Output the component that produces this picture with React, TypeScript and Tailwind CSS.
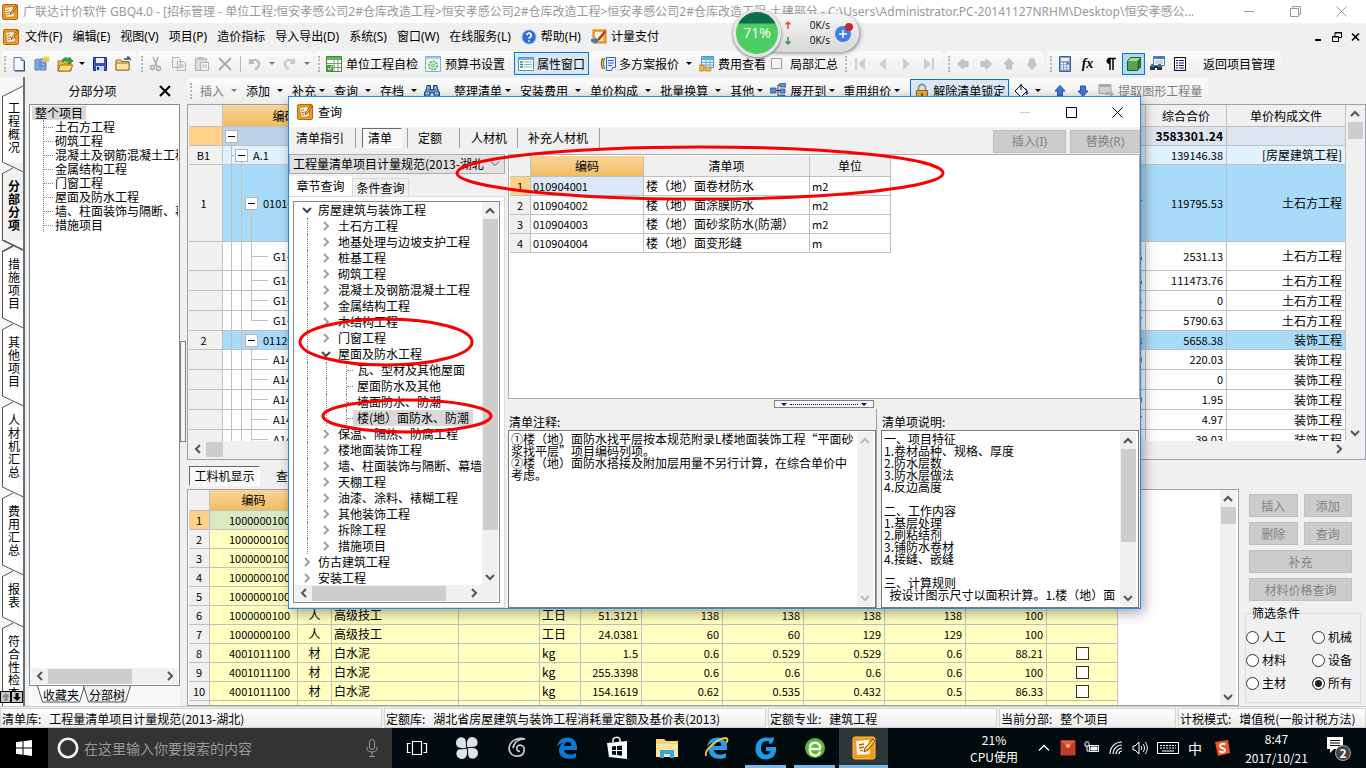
import type { ReactNode } from "react";

/* ---------- small shared pieces ---------- */

const AppIcon = ({ className = "w-4 h-4" }: { className?: string }) => (
  <svg viewBox="0 0 16 16" className={`${className} shrink-0`} aria-hidden="true">
    <rect x="0.5" y="0.5" width="15" height="15" rx="1.5" fill="#f39a1b" stroke="#c4640c" />
    <path d="M2.5 3.5 L11 2.5 L12.5 12.5 L4 13.5 Z" fill="#fff6df" stroke="#b0660f" strokeWidth="0.6" />
    <path d="M4 6.5 L7 5.5 M4.3 8.8 L8 8 M4.6 11 L7 10.5" stroke="#a8540c" strokeWidth="0.9" />
    <path d="M14.2 1.2 L8.8 8.2 L8.2 10.6 L10.3 9.4 L15.2 2.4 Z" fill="#ffd23a" stroke="#8b2f08" strokeWidth="0.8" />
  </svg>
);

const Grip = () => <span className="h-4 w-[3px] shrink-0 border-l-2 border-dotted border-[#b4b4b4]" />;
const Sep = () => <span className="h-4 w-px shrink-0 bg-[#b9b9b9]" />;
const Caret = ({ className = "w-3", muted = false, fill = "#000" }: { className?: string; muted?: boolean; fill?: string }) => (
  <span className={`flex shrink-0 justify-center ${className}`}>
    <svg viewBox="0 0 6 3" className="h-[3px] w-[6px]">
      <path d="M0 0h6L3 3z" fill={muted ? "#777" : fill} />
    </svg>
  </span>
);

const Tool = ({ label, className = "w-[23px]", children }: { label: string; className?: string; children: ReactNode }) => (
  <button aria-label={label} className={`flex h-[22px] shrink-0 items-center justify-center ${className}`}>
    <svg viewBox="0 0 16 16" className="h-4 w-4" fill="none">
      {children}
    </svg>
  </button>
);

const Ico = ({ children }: { children: ReactNode }) => (
  <svg viewBox="0 0 16 16" className="h-4 w-4 shrink-0" fill="none" aria-hidden="true">
    {children}
  </svg>
);

const Strip = ({ className = "", children }: { className?: string; children: ReactNode }) => (
  <div className={`flex h-[26px] shrink-0 items-center rounded-sm bg-linear-to-b from-[#fbfbfb] to-[#ededed] ${className}`}>{children}</div>
);

const arrowPaths = {
  up: "M2 8 L6 4 L10 8",
  down: "M2 4 L6 8 L10 4",
  left: "M8 2 L4 6 L8 10",
  right: "M4 2 L8 6 L4 10",
};

const Chevron = ({ dir, color = "#555" }: { dir: keyof typeof arrowPaths; color?: string }) => (
  <svg viewBox="0 0 12 12" className="h-3 w-3 shrink-0" fill="none">
    <path d={arrowPaths[dir]} stroke={color} strokeWidth="2" />
  </svg>
);

const VScroll = ({ thumb = "", muted = false }: { thumb?: string; muted?: boolean }) => (
  <div className="flex w-4 shrink-0 flex-col items-center bg-[#f0f0f0]">
    <span className="flex h-[17px] items-center">
      <Chevron dir="up" color={muted ? "#bbb" : "#555"} />
    </span>
    <span className={`w-[15px] bg-[#cdcdcd] ${thumb}`} />
    <span className="flex-1" />
    <span className="flex h-[17px] items-center">
      <Chevron dir="down" color={muted ? "#bbb" : "#555"} />
    </span>
  </div>
);

const HScroll = ({ thumb, pad = "" }: { thumb: string; pad?: string }) => (
  <div className={`flex h-4 shrink-0 items-center bg-[#f0f0f0] ${pad}`}>
    <span className="flex w-[17px] justify-center">
      <Chevron dir="left" />
    </span>
    <span className={`h-[15px] bg-[#cdcdcd] ${thumb}`} />
    <span className="flex-1" />
    <span className="flex w-[17px] justify-center">
      <Chevron dir="right" />
    </span>
  </div>
);

/* ---------- title and menu ---------- */

const TitleBar = () => (
  <header className="flex h-[23px] shrink-0 items-center bg-white pl-0.5 text-[#999]">
    <AppIcon />
    <h1 className="ml-[5px] min-w-0 flex-1 overflow-hidden whitespace-nowrap text-xs [font-family:'Noto_Sans','Noto_Sans_CJK_SC',sans-serif]">
      广联达计价软件 GBQ4.0 - [招标管理 - 单位工程:恒安孝感公司2#仓库改造工程&gt;恒安孝感公司2#仓库改造工程&gt;恒安孝感公司2#仓库改造工程-土建部分 -
      C:\Users\Administrator.PC-20141127NRHM\Desktop\恒安孝感公...
    </h1>
    <div className="flex gap-[35px] pr-[19px]">
      <button aria-label="最小化">
        <svg viewBox="0 0 11 11" className="h-[11px] w-[11px]" stroke="#999"><path d="M0 5.5h10" /></svg>
      </button>
      <button aria-label="还原">
        <svg viewBox="0 0 11 11" className="h-[11px] w-[11px]" stroke="#999" fill="none"><path d="M.5 2.5h8v8h-8zM2.500 2.500v-2h8v8h-2" /></svg>
      </button>
      <button aria-label="关闭">
        <svg viewBox="0 0 11 11" className="h-[11px] w-[11px]" stroke="#999"><path d="M.5.5l10 10M10.500.5l-10 10" /></svg>
      </button>
    </div>
  </header>
);

const menus = ["文件(F)", "编辑(E)", "视图(V)", "项目(P)", "造价指标", "导入导出(D)", "系统(S)", "窗口(W)", "在线服务(L)"];

const MenuBar = () => (
  <nav className="flex h-[27px] shrink-0 items-center pl-[3px] text-xs [font-family:'Noto_Sans','Noto_Sans_CJK_SC',sans-serif]">
    <AppIcon />
    <div className="ml-[6px] flex gap-[10px] whitespace-nowrap">
      {menus.map((m) => (
        <button key={m}>{m}</button>
      ))}
      <button className="flex items-center gap-1">
        <Ico>
          <circle cx="8" cy="8" r="7" fill="#2e6bd6" stroke="#9db9e8" />
          <path d="M5.800 6.300a2.200 2.200 0 1 1 3.200 2c-.8.4-1 .8-1 1.500M8 11.200v1.500" stroke="#fff" strokeWidth="1.700" />
        </Ico>
        帮助(H)
      </button>
      <button className="flex items-center gap-1">
        <Ico>
          <rect x="2" y="1" width="13" height="13" fill="#f7a52a" stroke="#d77a10" />
          <path d="M4 3h8v9H4z" fill="#fff3dc" />
          <path d="M14 1L7 9l-1 3 3-1 6-8z" fill="#b5391c" />
          <path d="M0 10h4V8l4 3.500L4 15v-2H0z" fill="#2d7fd6" />
        </Ico>
        计量支付
      </button>
    </div>
    <div className="ml-auto flex items-center gap-[9px] pr-[5px]">
      <button aria-label="最小化子窗口">
        <svg viewBox="0 0 10 10" className="h-[10px] w-[10px]"><path d="M2 7h6v2H2z" /></svg>
      </button>
      <button aria-label="还原子窗口">
        <svg viewBox="0 0 10 10" className="h-[10px] w-[10px]" fill="none" stroke="#000"><path d="M.5 4.500h6v5h-6zM.5 5h6M3 4V.5h6.500v5H7M3 1h6.500" /></svg>
      </button>
      <button aria-label="关闭子窗口">
        <svg viewBox="0 0 10 10" className="h-[10px] w-[10px]" stroke="#000" strokeWidth="1.600"><path d="M1 1.500l7 7M8 1.500l-7 7" /></svg>
      </button>
    </div>
  </nav>
);

/* ---------- toolbars ---------- */

const ArrowShape = ({ rotate, fill, stroke }: { rotate: number; fill: string; stroke: string }) => (
  <path d="M8 2.500L13 8h-2.500v5h-5V8H3z" transform={`rotate(${rotate} 8 8)`} fill={fill} stroke={stroke} />
);

const MainToolbar = () => (
  <div className="flex h-[27px] shrink-0 items-center whitespace-nowrap pl-0.5 text-xs">
    <Strip className="w-[134px] pl-0.5">
      <Grip />
      <Tool label="新建">
        <path d="M3 1.500h7l3 3v10H3z" fill="#f4f9ff" stroke="#5c7ea8" />
        <path d="M10 1.500v3h3" stroke="#5c7ea8" />
        <path d="M13.500 5v10H4" stroke="#2f4866" />
      </Tool>
      <Tool label="新建工程">
        <path d="M1 4l4-1v11H1zM6 3h6v11H6z" fill="#9cc0ea" stroke="#4f7bb3" />
        <path d="M7.500 5v8M10 5v8M3 5v8M6 7h6M6 10h6" stroke="#4f7bb3" strokeWidth=".7" />
        <path d="M12.500 0v7M9 3.500h7M10 1l5 5M15 1l-5 5" stroke="#f3c535" strokeWidth="1.200" />
      </Tool>
      <Tool label="打开">
        <path d="M1 5h5l1 2h7v8H1z" fill="#f0b93c" stroke="#a2701a" />
        <path d="M3 9h13l-3 6H1z" fill="#ffdc78" stroke="#a2701a" />
        <path d="M5 5c1-4 6-4 7-1V1l4 4-4 3V6c-2-1-4-1-7-1z" fill="#2fae2f" stroke="#14731a" strokeWidth=".7" />
      </Tool>
      <Caret />
      <Tool label="保存">
        <path d="M1.500 1.500h13v13h-13z" fill="#3c4fc6" stroke="#1e2a8a" />
        <path d="M4 2h8v5H4z" fill="#eef1ff" />
        <path d="M4 10h8v5H4z" fill="#cfd6f8" />
        <path d="M5 11h2v3H5z" fill="#1e2a8a" />
      </Tool>
      <Tool label="工程目录">
        <path d="M1 4h5l1 1.500h7V14H1z" fill="#f4cd7d" stroke="#a2701a" />
        <path d="M1 7h13v7H1z" fill="#fbe3a7" stroke="#a2701a" />
        <path d="M9 3h4V1l3 3" stroke="#234a86" strokeWidth="1.500" />
      </Tool>
    </Strip>
    <Strip className="ml-0.5 w-[175px] pl-[3px]">
      <Grip />
      <Tool label="剪切">
        <path d="M5 1l4 9M10 1L7 10" stroke="#aaa" strokeWidth="1.400" />
        <circle cx="4.500" cy="11.500" r="2" stroke="#aaa" strokeWidth="1.400" />
        <circle cx="10.500" cy="12.500" r="2" stroke="#aaa" strokeWidth="1.400" />
      </Tool>
      <Tool label="复制">
        <path d="M1.500 1.500h6l2 2v8h-8zM6.500 5.500h6l2 2v7h-8z" fill="#eee" stroke="#b3b3b3" />
        <path d="M8 9h5M8 11h5" stroke="#bbb" />
      </Tool>
      <Tool label="粘贴">
        <path d="M1.500 2.500h11v12h-11z" fill="#ddd" stroke="#b3b3b3" />
        <path d="M4.500 1h5v3h-5z" fill="#bbb" />
        <path d="M6.500 6.500h8v8h-8z" fill="#f3f3f3" stroke="#b3b3b3" />
        <path d="M8 9h5M8 11h5" stroke="#bbb" />
      </Tool>
      <Tool label="删除"><path d="M2 2l12 12M14 2L2 14" stroke="#aaa" strokeWidth="1.800" /></Tool>
      <span className="flex w-[9px] justify-center"><Sep /></span>
      <Tool label="撤销" className="w-5"><path d="M3 3v4h4M3.500 6.500C7 2 13 4 12 9c-.5 2-2 3.500-4 4" stroke="#b8b8b8" strokeWidth="2.200" /></Tool>
      <Caret className="w-[13px]" muted />
      <Tool label="重做" className="w-[22px]"><path d="M13 3v4H9M12.500 6.500C9 2 3 4 4 9c.5 2 2 3.500 4 4" stroke="#c8c8c8" strokeWidth="2.200" /></Tool>
      <Caret className="w-[13px]" muted />
    </Strip>
    <Strip className="ml-0.5 w-[526px] pl-[3px]">
      <Grip />
      <button className="ml-[5px] flex items-center gap-1">
        <Ico>
          <path d="M.5.5h15v15H.5z" fill="#fff" stroke="#3c8a34" />
          <path d="M1 1h14v3H1z" fill="#5cb84a" />
          <path d="M1 7.500h14M1 11.500h14M8 4v11M12 4v11" stroke="#8a8a8a" />
          <path d="M1 9h6v6H1z" fill="#41a235" /><path d="M2 12l1.500 2L6 10" stroke="#fff" />
        </Ico>
        单位工程自检
      </button>
      <button className="ml-[7px] flex items-center gap-1">
        <Ico>
          <path d="M.5.5h15v15H.5z" fill="#eef8f0" stroke="#7eaed4" /><path d="M1 1h14v2H1z" fill="#a9cdec" />
          <circle cx="8" cy="9.500" r="4" stroke="#4fae5a" strokeWidth="1.700" strokeDasharray="2 1" />
          <circle cx="8" cy="9.500" r="1.500" stroke="#4fae5a" />
        </Ico>
        预算书设置
      </button>
      <span className="ml-[6px] mr-[3px]"><Sep /></span>
      <button className="flex h-[23px] items-center gap-[3px] border border-[#0078d7] bg-[#dbe8f4] px-[3px]">
        <Ico>
          <path d="M.5 1.500h15v13H.5z" fill="#fff" stroke="#5b8fc2" /><path d="M1 2h14v2H1z" fill="#7db3e6" />
          <path d="M2 6h3M2 8.500h3M2 11h3" stroke="#2f8f6a" strokeWidth="1.500" /><path d="M6 6h8M6 8.500h8M6 11h8" stroke="#88b8a0" />
        </Ico>
        属性窗口
      </button>
      <span className="mx-1"><Sep /></span>
      <button className="ml-[3px] flex items-center gap-[3px]">
        <Ico>
          <path d="M3 2c-2 2-2 9 0 11" stroke="#e03c2a" strokeWidth="1.500" /><path d="M5 2c-2 2-2 9 0 11" stroke="#4fae3a" strokeWidth="1.500" />
          <path d="M6.500 1.500h9v10h-3l-1 3h-5z" fill="#e7f1ff" stroke="#2f62c4" /><path d="M8 4.500h6M8 7h6M8 9.500h4" stroke="#2f62c4" />
        </Ico>
        多方案报价
      </button>
      <Caret className="w-5" />
      <button className="flex items-center gap-[3px]">
        <Ico>
          <path d="M2.500.5h12v11h-12z" fill="#eaf3ff" stroke="#5b8fc2" /><path d="M3 1h11v3H3z" fill="#58b8d8" />
          <path d="M3 6.500h11M3 9h11M7 4v7M11 4v7" stroke="#6aa9d9" />
          <path d="M0 9h5v6H0zM6 11h6v4H6z" fill="#e6b84a" stroke="#b4852a" strokeWidth=".7" />
        </Ico>
        费用查看
      </button>
      <label className="ml-[5px] flex items-center gap-2">
        <input type="checkbox" className="h-[11px] w-[11px] appearance-none border border-[#a0a0a0] bg-[#f4f4f4]" />
        局部汇总
      </label>
    </Strip>
    <Strip className="ml-0.5 w-[100px] pl-0.5">
      <Grip />
      <Tool label="首条"><path d="M3 2h2v12H3zM13 2v12L6 8z" fill="#cfcfcf" /></Tool>
      <Tool label="上一条"><path d="M11 2v12L4 8z" fill="#cfcfcf" /></Tool>
      <Tool label="下一条"><path d="M5 2v12l7-6z" fill="#cfcfcf" /></Tool>
      <Tool label="末条"><path d="M11 2h2v12h-2zM3 2v12l7-6z" fill="#cfcfcf" /></Tool>
    </Strip>
    <Strip className="ml-0.5 w-[99px] pl-[3px]">
      <Grip />
      <Tool label="升级"><ArrowShape rotate={-90} fill="#c6c6c6" stroke="#bbb" /></Tool>
      <Tool label="降级"><ArrowShape rotate={90} fill="#c6c6c6" stroke="#bbb" /></Tool>
      <Tool label="上移"><ArrowShape rotate={0} fill="#c6c6c6" stroke="#bbb" /></Tool>
      <Tool label="下移"><ArrowShape rotate={180} fill="#c6c6c6" stroke="#bbb" /></Tool>
    </Strip>
    <Strip className="ml-[3px] w-[234px] pl-[3px]">
      <Grip />
      <Tool label="计算器">
        <path d="M2.500.5h11v15h-11z" fill="#7f9fd0" stroke="#3d5f98" /><path d="M4 2h8v3H4z" fill="#e7f0fb" />
        <path d="M4 7.500h8M4 10h8M4 12.500h8" stroke="#fff" strokeWidth="1.600" strokeDasharray="2 1" /><path d="M10 7.500h2" stroke="#d33" strokeWidth="1.600" />
      </Tool>
      <button aria-label="函数" className="w-[23px] text-center text-sm font-bold italic leading-4 [font-family:'Liberation_Serif',serif]">fx</button>
      <Tool label="特殊符号"><path d="M7 2v12M10 2v12M5 2.500h8" stroke="#000" strokeWidth="1.500" /><path d="M7 2a3.500 3 0 0 0 0 6z" fill="#000" /></Tool>
      <button aria-label="三维视图" className="flex h-[22px] w-[23px] shrink-0 items-center justify-center border border-[#0078d7] bg-[#b5d8f2]">
        <Ico>
          <path d="M1.500 5l3-3.500h10V11l-3 3.500h-10z" fill="#58a352" stroke="#215b25" /><path d="M2 5l3-3h9l-3 3z" fill="#a6dba0" /><path d="M11.500 5l3-3v9l-3 3z" fill="#2c7330" />
        </Ico>
      </button>
      <Tool label="查找报表">
        <path d="M4.500.5h11v9h-11z" fill="#fff" stroke="#4a78c2" /><path d="M5 1h10v2H5z" fill="#4a78c2" /><path d="M6 5h8M6 7h8" stroke="#9ab" />
        <path d="M1 10h5v4H1zM8 10h5v4H8z" fill="#26374f" /><path d="M2 8h3v3H2zM9 8h3v3H9z" fill="#4f6f96" /><path d="M5 11h4" stroke="#26374f" strokeWidth="2" />
      </Tool>
      <Tool label="清单列表"><path d="M2.500 1.500h11v13h-11z" fill="#fff" stroke="#000" /><path d="M4 4.500h2M7 4.500h5M4 7h2M7 7h5M4 9.500h2M7 9.500h5M4 12h2M7 12h5" stroke="#101070" strokeWidth="1.200" /></Tool>
      <span className="ml-1 mr-2"><Sep /></span>
      <button>返回项目管理</button>
    </Strip>
  </div>
);

type Drop = { text: string; tight?: boolean; muted?: boolean };
const dropsA: Drop[] = [
  { text: "插入", muted: true },
  { text: "添加" },
  { text: "补充", tight: true },
  { text: "查询" },
  { text: "存档" },
];
const dropsB: Drop[] = [
  { text: "整理清单", tight: true },
  { text: "安装费用" },
  { text: "单价构成" },
  { text: "批量换算" },
  { text: "其他", tight: true },
];

const DropButton = ({ text, tight, muted }: Drop) => (
  <button className={`flex shrink-0 items-center ${tight ? "pr-1.5" : "pr-0.5"} ${muted ? "text-[#7d7d7d]" : ""}`}>
    {text}
    <Caret className={tight ? "w-3" : "w-5"} muted={muted} />
  </button>
);

const EditToolbar = () => (
  <div className="flex h-[27px] shrink-0 items-center overflow-hidden whitespace-nowrap text-xs">
    <Strip className="w-[1021px] pl-[3px]">
      <Grip />
      <span className="w-[7px] shrink-0" />
      {dropsA.map((d) => <DropButton key={d.text} {...d} />)}
      <Tool label="查找" className="-ml-0.5 w-4">
        <path d="M3 2.500h3.500v4H9.500v-4H13l.5 3L15.500 10v4.500H10V10H6v4.500H.5V10l2-4.500z" fill="#5c8dc6" stroke="#23456e" />
        <path d="M2 10.500h3M11 10.500h3M4 3.500v2M11.500 3.500v2" stroke="#cfe0f3" />
      </Tool>
      <span className="mx-[7px]"><Sep /></span>
      {dropsB.map((d) => <DropButton key={d.text} {...d} />)}
      <button className="-ml-0.5 flex shrink-0 items-center">
        <Ico>
          <path d="M0 5h6v5H0zM10 0h6v4h-6zM10 6h5v4h-5zM10 12h5v3h-5z" fill="#5b8fd6" stroke="#2c559a" strokeWidth=".8" />
          <path d="M6 7.500h4M8 2v11h2M8 2h2" stroke="#333" />
        </Ico>
        <span className="ml-1">展开到</span>
        <Caret />
      </button>
      <span className="w-[5px] shrink-0" />
      <DropButton text="重用组价" tight />
      <span className="mr-px"><Sep /></span>
      <button className="flex h-6 shrink-0 items-center gap-[3px] border border-[#0078d7] bg-[#dbe8f4] px-[3px]">
        <Ico>
          <path d="M4.500 8V5a3.500 3.500 0 0 1 7 0v3" stroke="#8f8f8f" strokeWidth="1.800" /><path d="M2.500 7.500h11v8h-11z" fill="#e9a93a" stroke="#9a6413" /><path d="M8 10v3" stroke="#5c3a08" strokeWidth="1.500" />
        </Ico>
        解除清单锁定
      </button>
      <Tool label="填充颜色">
        <path d="M2 8l6-6 6 6-6 6z" fill="#fff" stroke="#000" /><path d="M8 1v6" stroke="#000" /><path d="M11 5c3 0 4 3 4 6l-2 1V8z" fill="#123a8c" />
      </Tool>
      <Caret />
      <span className="mx-[2px]"><Sep /></span>
      <Tool label="上移行"><ArrowShape rotate={0} fill="#3f76d8" stroke="#2554a8" /></Tool>
      <Tool label="下移行"><ArrowShape rotate={180} fill="#3f76d8" stroke="#2554a8" /></Tool>
      <button className="ml-1 flex shrink-0 items-center gap-1 text-[#7d7d7d]">
        <Ico>
          <path d="M1 1.500h12v9H1z" fill="#d5d5d5" stroke="#aaa" /><path d="M1 1h12v3H1z" fill="#aaa" /><path d="M7 9h5v-3l4 5-4 4v-3H7z" fill="#bbb" />
        </Ico>
        提取图形工程量
      </button>
    </Strip>
  </div>
);

/* ---------- left side ---------- */

const sideTabs = ["工程概况", "分部分项", "措施项目", "其他项目", "人材机汇总", "费用汇总", "报表", "符合性检查"];

const SideTabs = () => (
  <div className="relative flex w-[25px] shrink-0 flex-col overflow-hidden border-r-2 border-[#6d6d6d] bg-[#f6f6f6] pt-2 text-xs">
    {sideTabs.map((t, i) => {
      const active = t === "分部分项";
      return (
        <button key={t} className={`relative ml-0.5 shrink-0 border-l border-[#555] px-[5px] pb-[10px] pt-4 leading-[13px] ${active ? "bg-[#f0f0f0] font-bold" : "bg-white"}`}>
          {i === 0 && (
            <svg viewBox="0 0 22 12" className="absolute -left-px top-0 h-3 w-[22px]" fill="none">
              <path d="M0 0h22L0 11z" fill="#f6f6f6" />
              <path d="M22 .5L.5 11.500" stroke="#555" />
            </svg>
          )}
          <span className="block w-3 break-all">{t}</span>
          <svg viewBox="0 0 22 12" className="absolute -left-px bottom-[-11px] z-10 h-3 w-[22px]" fill="none">
            <path d="M0 0L22 11H0z" fill="#f6f6f6" />
            <path d="M.5 0L21.500 10M11 6L.5 11.500" stroke="#555" strokeWidth={active ? 1.600 : 1} />
          </svg>
        </button>
      );
    })}
    <div className="absolute bottom-[3px] left-0 z-20 flex">
      <button aria-label="上一页签" className="flex h-3 w-[11px] items-center justify-center border border-black bg-[#c8c8c8]">
        <svg viewBox="0 0 8 8" className="h-2 w-2"><path d="M4 0l4 4H5.500v4h-3V4H0z" fill="#888" /></svg>
      </button>
      <button aria-label="下一页签" className="flex h-3 w-3 items-center justify-center border border-black bg-[#c8c8c8]">
        <svg viewBox="0 0 8 8" className="h-2 w-2"><path d="M4 8l4-4H5.500V0h-3v4H0z" /></svg>
      </button>
    </div>
  </div>
);

const sections = ["土石方工程", "砌筑工程", "混凝土及钢筋混凝土工程", "金属结构工程", "门窗工程", "屋面及防水工程", "墙、柱面装饰与隔断、幕墙", "措施项目"];

const SectionPanel = () => (
  <aside className="flex w-[155px] shrink-0 flex-col pl-1 text-xs">
    <div className="flex h-[27px] shrink-0 items-center pr-[9px]">
      <h2 className="flex-1 pr-[3px] text-center">分部分项</h2>
      <button aria-label="关闭面板">
        <svg viewBox="0 0 12 12" className="h-3 w-3" stroke="#000" strokeWidth="2"><path d="M1 1l10 10M11 1L1 11" /></svg>
      </button>
    </div>
    <div className="flex min-h-0 flex-1 flex-col border border-[#828790] bg-white p-px">
      <div className="flex-1 overflow-hidden whitespace-nowrap leading-[14px]">
        <span className="ml-px inline-block bg-[#d9d9d9] px-[3px] align-top">整个项目</span>
        <ul className="ml-3 border-l border-dotted border-[#808080]">
          {sections.map((s) => (
            <li key={s} className="flex h-[14px] items-center">
              <span className="mr-0.5 w-[9px] shrink-0 border-t border-dotted border-[#808080]" />
              {s}
            </li>
          ))}
        </ul>
      </div>
      <HScroll thumb="w-[84px]" />
    </div>
    <div className="flex h-5 shrink-0 items-start bg-[#f8f8f8] pl-2">
      {["收藏夹", "分部树"].map((t) => (
        <button key={t} className="relative -mr-0.5 h-[17px] w-[48px] leading-[17px]">
          <svg viewBox="0 0 48 17" className="absolute inset-0 h-[17px] w-[48px]" fill={t === "收藏夹" ? "#fff" : "#f0f0f0"}>
            <path d="M.5 0l5 16h37l5-16" stroke="#555" />
          </svg>
          <span className="relative">{t}</span>
        </button>
      ))}
    </div>
  </aside>
);

/* ---------- upper grid ---------- */

type Line = { no: string; code: string; level: number; tail?: string; total: string; file: string; h: string; tone: string; last?: boolean };

const white = "bg-white";
const blue = "bg-[#a8dbfa]";
const lines: Line[] = [
  { no: "", code: "", level: 0, total: "3583301.24", file: "", h: "h-[19px]", tone: "bg-[#dde4ef]" },
  { no: "B1", code: "A.1", level: 1, total: "139146.38", file: "[房屋建筑工程]", h: "h-[19px]", tone: "bg-[#e0f2fd]" },
  { no: "1", code: "010101", level: 2, tail: "7", total: "119795.53", file: "土石方工程", h: "h-[77px]", tone: blue },
  { no: "", code: "G1-", level: 3, tail: "6", total: "2531.13", file: "土石方工程", h: "h-[29px]", tone: white },
  { no: "", code: "G1-", level: 3, tail: "6", total: "111473.76", file: "土石方工程", h: "h-5", tone: white },
  { no: "", code: "G1-", level: 3, tail: "4", total: "0", file: "土石方工程", h: "h-5", tone: white },
  { no: "", code: "G1-", level: 3, tail: "7", total: "5790.63", file: "土石方工程", h: "h-5", tone: white, last: true },
  { no: "2", code: "011201", level: 2, tail: "8", total: "5658.38", file: "装饰工程", h: "h-[19px]", tone: blue },
  { no: "", code: "A14", level: 3, tail: "9", total: "220.03", file: "装饰工程", h: "h-5", tone: white },
  { no: "", code: "A14", level: 3, total: "0", file: "装饰工程", h: "h-5", tone: white },
  { no: "", code: "A14", level: 3, tail: "9", total: "1.95", file: "装饰工程", h: "h-5", tone: white },
  { no: "", code: "A14", level: 3, tail: "7", total: "4.97", file: "装饰工程", h: "h-5", tone: white },
  { no: "", code: "A14", level: 3, tail: "2", total: "39.03", file: "装饰工程", h: "h-5", tone: white },
];

const cell = "flex items-center border-b border-r border-[#c0c0c0]";

const TreeCode = ({ line }: { line: Line }) => (
  <>
    <span className="w-2 shrink-0" />
    {Array.from({ length: Math.min(line.level, 2) }, (_, i) => (
      <span key={i} className="flex h-full w-[10px] shrink-0 items-center border-l border-[#c0c0c0]">
        {i === line.level - 1 && <i className="h-px w-full bg-[#c0c0c0]" />}
      </span>
    ))}
    {line.level === 3 ? (
      <span className="flex h-full w-[22px] shrink-0 flex-col">
        <i className="w-[17px] flex-1 border-b border-l border-[#c0c0c0]" />
        <i className={`w-[17px] flex-1 ${line.last ? "" : "border-l border-[#c0c0c0]"}`} />
      </span>
    ) : (
      <span className="-ml-[6px] mr-[5px] flex h-full w-[13px] shrink-0 flex-col items-center">
        <i className="flex-1" />
        <i className="flex h-[13px] w-[13px] shrink-0 items-center justify-center border border-[#b4b4b4] bg-white">
          <i className="h-px w-[7px] bg-black" />
        </i>
        <i className="w-px flex-1 bg-[#c0c0c0]" />
      </span>
    )}
    <span className="text-[11px]">{line.code}</span>
  </>
);

const BillGrid = () => (
  <section className="flex h-[356px] shrink-0 flex-col border border-[#a0a0a8] bg-[#f0f0f0] pl-px">
    <div className="flex min-h-0 flex-1">
      <div className="min-w-0 flex-1 overflow-hidden bg-white">
        <table className="w-full table-fixed border-separate border-spacing-0 text-xs">
          <colgroup>
            <col className="w-[34px]" />
            <col className="w-[124px]" />
            <col />
            <col className="w-[81px]" />
            <col className="w-[119px]" />
          </colgroup>
          <thead>
            <tr className="bg-[#f0f0f0]">
              <th className="p-0 font-normal"><div className={`${cell} h-[22px]`} /></th>
              <th className="p-0 font-normal"><div className={`${cell} h-[22px] justify-center bg-linear-to-b from-[#f9d59a] to-[#f0bd60]`}>编码</div></th>
              <th className="p-0 font-normal"><div className={`${cell} h-[22px]`} /></th>
              <th className="p-0 font-normal"><div className={`${cell} h-[22px] justify-center`}>综合合价</div></th>
              <th className="p-0 font-normal"><div className={`${cell} h-[22px] justify-center`}>单价构成文件</div></th>
            </tr>
          </thead>
          <tbody>
            {lines.map((l, i) => (
              <tr key={i} className={l.tone}>
                <td className="p-0"><div className={`${cell} ${l.h} justify-center pr-1 text-[11px] ${i === 0 ? "bg-[#ffd28a]" : "bg-[#f0f0f0]"}`}>{l.no}</div></td>
                <td className="p-0"><div className={`${cell} ${l.h} ${i === 0 ? "bg-[#bcd3ea]" : ""}`}><TreeCode line={l} /></div></td>
                <td className="p-0"><div className={`${cell} ${l.h} justify-end pr-[3px] text-[11px]`}>{l.tail}</div></td>
                <td className="p-0"><div className={`${cell} ${l.h} justify-end pr-[3px] ${i === 0 ? "text-xs font-bold" : "text-[11px]"}`}>{l.total}</div></td>
                <td className="p-0"><div className={`${cell} ${l.h} justify-end pr-[3px]`}>{l.file}</div></td>
              </tr>
            ))}
          </tbody>
        </table>
      </div>
      <span className="w-px" />
      <VScroll thumb="h-[17px]" />
      <span className="w-0.5" />
    </div>
    <HScroll thumb="w-[17px]" pad="pr-[18px] mb-[2px]" />
  </section>
);

/* ---------- lower grid ---------- */

const resources: string[][] = [
  ["1000000100"],
  ["1000000100"],
  ["1000000100"],
  ["1000000100"],
  ["1000000100"],
  ["1000000100", "人", "高级技工", "", "工日", "51.3121", "138", "138", "138", "138", "100"],
  ["1000000100", "人", "高级技工", "", "工日", "24.0381", "60", "60", "129", "129", "100"],
  ["4001011100", "材", "白水泥", "", "kg", "1.5", "0.6", "0.529", "0.529", "0.6", "88.21"],
  ["4001011100", "材", "白水泥", "", "kg", "255.3398", "0.6", "0.6", "0.6", "0.6", "100"],
  ["4001011100", "材", "白水泥", "", "kg", "154.1619", "0.62", "0.535", "0.432", "0.5", "86.33"],
  [""],
];

const align = (c: number) => {
  if (c === 0) return "justify-end pr-[7px] text-[11px]";
  if (c === 1) return "justify-center";
  if (c < 5) return "justify-start pl-0.5";
  return "justify-end pr-[3px] text-[11px]";
};

const ResourceGrid = () => (
  <section className="flex min-w-0 flex-1 border border-[#a0a0a8] bg-white pl-px">
    <div className="min-w-0 flex-1 overflow-hidden">
      <table className="w-[929px] table-fixed border-separate border-spacing-0 text-xs">
        <colgroup>
          <col className="w-[21px]" />
          <col className="w-[88px]" />
          <col className="w-[34px]" />
          <col className="w-[127px]" />
          <col className="w-[81px]" />
          <col className="w-[41px]" />
          <col className="w-[61px]" />
          <col className="w-[81px]" />
          <col className="w-[81px]" />
          <col className="w-[81px]" />
          <col className="w-[81px]" />
          <col className="w-[81px]" />
          <col className="w-[71px]" />
        </colgroup>
        <thead>
          <tr>
            {Array.from({ length: 13 }, (_, i) => (
              <th key={i} className="p-0 font-normal">
                <div className={`${cell} h-[21px] justify-center ${i === 1 ? "bg-linear-to-b from-[#f9d59a] to-[#f0bd60]" : "bg-[#f0f0f0]"}`}>{i === 1 ? "编码" : ""}</div>
              </th>
            ))}
          </tr>
        </thead>
        <tbody>
          {resources.map((r, i) => (
            <tr key={i} className="bg-[#ffffbf]">
              <td className="p-0"><div className={`${cell} h-[19px] justify-center text-[11px] ${i === 0 ? "bg-[#ffd28a]" : "bg-[#f0f0f0]"}`}>{i < 10 ? i + 1 : ""}</div></td>
              {Array.from({ length: 11 }, (_, c) => (
                <td key={c} className="p-0"><div className={`${cell} h-[19px] ${align(c)} ${i === 0 && c === 0 ? "bg-[#d8eac2]" : ""}`}>{r[c]}</div></td>
              ))}
              <td className="p-0">
                <div className={`${cell} h-[19px] justify-center`}>
                  {r[1] === "材" && <input type="checkbox" aria-label={`第${i + 1}行锁定`} className="h-[13px] w-[13px] appearance-none border border-[#333] bg-white" />}
                </div>
              </td>
            </tr>
          ))}
        </tbody>
      </table>
    </div>
    <VScroll thumb="h-[17px]" />
    <span className="w-0.5 bg-white" />
  </section>
);

const FlatButton = ({ children, className = "" }: { children: ReactNode; className?: string }) => (
  <button disabled className={`h-[23px] border border-[#bfbfbf] bg-[#cccccc] text-[#838383] ${className}`}>
    {children}
  </button>
);

const SidePanel = () => (
  <aside className="flex w-[127px] shrink-0 flex-col gap-[5px] pl-[6px] pr-[5px] pt-[5px] text-xs">
    <div className="grid grid-cols-2 gap-x-[6px] gap-y-[5px] pl-1 pr-[9px]">
      <FlatButton>插入</FlatButton>
      <FlatButton>添加</FlatButton>
      <FlatButton>删除</FlatButton>
      <FlatButton>查询</FlatButton>
      <FlatButton className="col-span-2">补充</FlatButton>
      <FlatButton className="col-span-2">材料价格查询</FlatButton>
    </div>
    <fieldset className="grid h-[97px] grid-cols-2 content-start gap-x-[18px] gap-y-[9px] border border-[#dcdcdc] pt-[10px]">
      <legend className="ml-[5px] px-px leading-[14px]">筛选条件</legend>
      {["人工", "机械", "材料", "设备", "主材", "所有"].map((t) => (
        <label key={t} className="flex h-[14px] items-center gap-[3px] whitespace-nowrap">
          <input
            type="radio"
            name="kind"
            defaultChecked={t === "所有"}
            className="h-[13px] w-[13px] shrink-0 appearance-none rounded-full border border-[#333] bg-white checked:bg-[#222] checked:shadow-[inset_0_0_0_2px_#fff]"
          />
          {t}
        </label>
      ))}
    </fieldset>
  </aside>
);

/* ---------- query dialog ---------- */

type Node = { text: string; level: number; open?: boolean };
const tree: Node[] = [
  { text: "房屋建筑与装饰工程", level: 0, open: true },
  { text: "土石方工程", level: 1 },
  { text: "地基处理与边坡支护工程", level: 1 },
  { text: "桩基工程", level: 1 },
  { text: "砌筑工程", level: 1 },
  { text: "混凝土及钢筋混凝土工程", level: 1 },
  { text: "金属结构工程", level: 1 },
  { text: "木结构工程", level: 1 },
  { text: "门窗工程", level: 1 },
  { text: "屋面及防水工程", level: 1, open: true },
  { text: "瓦、型材及其他屋面", level: 2 },
  { text: "屋面防水及其他", level: 2 },
  { text: "墙面防水、防潮", level: 2 },
  { text: "楼(地）面防水、防潮", level: 2 },
  { text: "保温、隔热、防腐工程", level: 1 },
  { text: "楼地面装饰工程", level: 1 },
  { text: "墙、柱面装饰与隔断、幕墙", level: 1 },
  { text: "天棚工程", level: 1 },
  { text: "油漆、涂料、裱糊工程", level: 1 },
  { text: "其他装饰工程", level: 1 },
  { text: "拆除工程", level: 1 },
  { text: "措施项目", level: 1 },
  { text: "仿古建筑工程", level: 0 },
  { text: "安装工程", level: 0 },
];

const dots = "h-4 shrink-0 border-l border-dotted border-[#808080]";

const TreeRow = ({ node }: { node: Node }) => {
  const mark = (
    <span className="flex w-[13px] shrink-0 justify-center">
      <Chevron dir={node.open ? "down" : "right"} color={node.open ? "#444" : "#a0a0a0"} />
    </span>
  );
  if (node.level === 0)
    return <li className="flex h-4 items-center pl-[6px]">{mark}<span className="ml-[5px]">{node.text}</span></li>;
  if (node.level === 1)
    return (
      <li className="flex h-4 items-center pl-[13px]">
        <span className={`${dots} w-3`} />
        {mark}
        <span className="ml-[6px]">{node.text}</span>
      </li>
    );
  const selected = node.text.startsWith("楼(");
  return (
    <li className="flex h-4 items-center pl-[13px]">
      <span className={`${dots} w-[19px]`} />
      <span className={`${dots} w-5`} />
      <span className={`${dots} flex w-[7px] items-center`}><i className="w-full border-t border-dotted border-[#808080]" /></span>
      <span className={`h-4 px-1 leading-4 ${selected ? "bg-[#d9d9d9]" : ""}`}>{node.text}</span>
    </li>
  );
};

const items = [
  ["010904001", "楼（地）面卷材防水", "m2"],
  ["010904002", "楼（地）面涂膜防水", "m2"],
  ["010904003", "楼（地）面砂浆防水(防潮）", "m2"],
  ["010904004", "楼（地）面变形缝", "m"],
];

const note = `①楼（地）面防水找平层按本规范附录L楼地面装饰工程“平面砂
浆找平层”项目编码列项。
②楼（地）面防水搭接及附加层用量不另行计算，在综合单价中
考虑。`;

const detail = `一、项目特征
1.卷材品种、规格、厚度
2.防水层数
3.防水层做法
4.反边高度

二、工作内容
1.基层处理
2.刷粘结剂
3.铺防水卷材
4.接缝、嵌缝

三、计算规则
  按设计图示尺寸以面积计算。1.楼（地）面`;

const TextPane = ({ id, title, value, className, thumb = "", muted = false }: { id: string; title: string; value: string; className: string; thumb?: string; muted?: boolean }) => (
  <div className={`flex flex-col ${className}`}>
    <label htmlFor={id} className="flex h-[21px] items-end pl-px leading-4">{title}</label>
    <div className="flex min-h-0 flex-1 border border-[#7a7a7a] bg-white p-px pr-0.5">
      <textarea id={id} readOnly value={value} className="min-w-0 flex-1 resize-none overflow-hidden whitespace-pre pl-px pt-px leading-3 outline-none" />
      <VScroll thumb={thumb} muted={muted} />
    </div>
  </div>
);

const VRule = () => <span className="h-5 w-px shrink-0 bg-[#a0a0a0]" />;

const QueryDialog = () => (
  <div role="dialog" aria-label="查询" className="absolute left-[288px] top-24 z-30 flex h-[513px] w-[853px] flex-col border border-[#2b88e8] bg-[#f0f0f0] text-xs shadow-[3px_4px_12px_rgba(0,0,0,0.35)]">
    <div className="flex h-[30px] shrink-0 items-center bg-white pl-2">
      <AppIcon />
      <h2 className="ml-[5px] flex-1">查询</h2>
      <div className="flex items-center gap-[35px] pr-[17px]">
        <button aria-label="最小化" disabled><svg viewBox="0 0 11 11" className="h-[11px] w-[11px]" stroke="#ccc"><path d="M0 5.500h10" /></svg></button>
        <button aria-label="最大化"><svg viewBox="0 0 11 11" className="h-[11px] w-[11px]" stroke="#000" fill="none"><path d="M.5.5h10v10H.5z" /></svg></button>
        <button aria-label="关闭"><svg viewBox="0 0 11 11" className="h-[11px] w-[11px]" stroke="#000"><path d="M.5.5l10 10M10.500.5l-10 10" /></svg></button>
      </div>
    </div>
    <div className="flex h-[27px] shrink-0 items-start">
      <div className="flex h-[22px] items-center whitespace-nowrap">
        <button className="pl-[7px] pr-[11px]">清单指引</button>
        <VRule />
        <button className="ml-[6px] mr-[5px] h-5 w-[40px] border border-white border-l-[#696969] border-t-[#696969] bg-[#f8f8f8] pr-1 text-center leading-[18px]">清单</button>
        <VRule />
        <button className="pl-[10px] pr-[17px]">定额</button>
        <VRule />
        <button className="pl-[11px] pr-[10px]">人材机</button>
        <VRule />
        <button className="pl-[10px] pr-[11px]">补充人材机</button>
        <VRule />
      </div>
      <div className="ml-auto flex gap-1 pt-[3px] [font-family:'Noto_Sans','Noto_Sans_CJK_SC',sans-serif]">
        <FlatButton className="w-[73px]">插入(I)</FlatButton>
        <FlatButton className="w-[70px]">替换(R)</FlatButton>
      </div>
    </div>

    <div className="flex min-h-0 flex-1">
      {/* chapter tree */}
      <div className="flex w-[216px] shrink-0 flex-col">
        <div className="relative flex h-5 shrink-0 items-center">
          <select aria-label="清单规范" className="h-5 w-full appearance-none border border-[#adadad] bg-[#e1e1e1] pl-[3px] leading-4">
            <option>工程量清单项目计量规范(2013-湖北</option>
          </select>
          <span className="pointer-events-none absolute right-px flex h-[18px] w-[18px] items-center justify-center">
            <svg viewBox="0 0 10 6" className="h-[6px] w-[10px]" fill="none" stroke="#555"><path d="M1 .5l4 4 4-4" /></svg>
          </span>
        </div>
        <div className="flex h-[22px] shrink-0 items-end">
          <button className="h-5 w-[63px] bg-white">章节查询</button>
          <button className="h-[18px] w-[57px] border border-b-0 border-[#d9d9d9] leading-4">条件查询</button>
        </div>
        <div className="flex min-h-0 flex-1 flex-col border border-l-0 border-[#dcdcdc] bg-white p-1">
          <div className="flex min-h-0 flex-1 flex-col border border-[#828790] px-px pb-px">
            <div className="flex min-h-0 flex-1">
              <ul className="-ml-px min-w-0 flex-1 overflow-hidden whitespace-nowrap">
                {tree.map((n) => <TreeRow key={n.text} node={n} />)}
              </ul>
              <VScroll thumb="h-[311px]" />
            </div>
            <HScroll thumb="w-[134px]" pad="pr-4" />
          </div>
        </div>
      </div>

      {/* item list and notes */}
      <div className="ml-[3px] flex min-w-0 flex-1 flex-col">
        <div className="h-[245px] shrink-0 border border-[#abadb3] bg-white pl-px pt-px">
          <table className="w-[381px] table-fixed border-separate border-spacing-0">
            <colgroup>
              <col className="w-[21px]" />
              <col className="w-[113px]" />
              <col className="w-[166px]" />
              <col className="w-[81px]" />
            </colgroup>
            <thead>
              <tr>
                {["", "编码", "清单项", "单位"].map((t) => (
                  <th key={t} className="p-0 font-normal">
                    <div className={`${cell} h-[21px] justify-center ${t === "编码" ? "bg-linear-to-b from-[#f9d59a] to-[#f0bd60]" : "bg-[#f0f0f0]"}`}>{t}</div>
                  </th>
                ))}
              </tr>
            </thead>
            <tbody>
              {items.map(([code, name, unit], i) => (
                <tr key={code}>
                  <td className="p-0"><div className={`${cell} h-[19px] justify-center text-[11px] ${i === 0 ? "bg-[#ffd28a]" : "bg-[#f0f0f0]"}`}>{i + 1}</div></td>
                  <td className="p-0"><div className={`${cell} h-[19px] pl-0.5 text-[11px] ${i === 0 ? "bg-[#d9e9f7]" : ""}`}>{code}</div></td>
                  <td className="p-0"><div className={`${cell} h-[19px] pl-0.5`}>{name}</div></td>
                  <td className="p-0"><div className={`${cell} h-[19px] pl-0.5 text-[11px]`}>{unit}</div></td>
                </tr>
              ))}
            </tbody>
          </table>
        </div>
        <div className="flex h-[10px] shrink-0 items-center justify-center">
          <span className="flex h-2 w-[100px] items-center justify-between border border-[#808080] bg-[#f8f8f8] px-[6px]">
            <Caret className="w-[6px]" fill="#000080" />
            <i className="w-[68px] border-t border-dotted border-[#000080]" />
            <Caret className="w-[6px]" fill="#000080" />
          </span>
        </div>
        <div className="flex min-h-0 flex-1">
          <TextPane id="note" title="清单注释:" value={note} className="w-[368px]" muted />
          <span className="mr-1 w-px bg-[#a0a0a0]" />
          <TextPane id="detail" title="清单项说明:" value={detail} className="mr-px min-w-0 flex-1" thumb="h-[93px]" />
        </div>
      </div>
    </div>

    {/* red marker rings */}
    <svg viewBox="0 0 851 511" className="pointer-events-none absolute inset-0 h-[511px] w-[851px]" fill="none" stroke="#fb0000" strokeWidth="3">
      <ellipse cx="411" cy="76" rx="243" ry="26" />
      <ellipse cx="97" cy="245" rx="86" ry="23" />
      <ellipse cx="118" cy="319" rx="84" ry="16" />
    </svg>
  </div>
);

/* ---------- floating meter ---------- */

const SpeedMeter = () => (
  <div className="absolute left-[733px] top-[9px] z-20 flex items-center [font-family:'Open_Sans',sans-serif]">
    <div className="z-10 flex h-12 w-12 items-center justify-center rounded-full border-[3px] border-[#e4e4e4] bg-linear-to-b from-[#0d6e49] from-25% to-[#4ccf62] to-30% text-sm text-white shadow-[0_1px_3px_rgba(0,0,0,0.6)]">71%</div>
    <div className="-ml-6 flex h-[38px] w-[102px] items-center rounded-full bg-linear-to-b from-[#f6f6f6] to-[#d8d8d8] pl-[27px] text-[10px] leading-[15px] shadow-[1px_1px_4px_rgba(0,0,0,0.5)]">
      <svg viewBox="0 0 8 26" className="h-[26px] w-2" fill="none" strokeWidth="1.500">
        <path d="M4 9V2M1.500 4.500L4 2l2.500 2.500" stroke="#e8533a" />
        <path d="M4 17v7M1.500 21.500L4 24l2.500-2.500" stroke="#2a9a50" />
      </svg>
      <div className="ml-4 w-[22px] whitespace-nowrap text-right">
        <p>0K/s</p>
        <p>0K/s</p>
      </div>
      <svg viewBox="0 0 20 20" className="ml-1 h-5 w-5 shrink-0">
        <circle cx="9" cy="11" r="8" fill="#3c84e0" />
        <path d="M9 7v8M5 11h8" stroke="#fff" strokeWidth="1.500" />
        <circle cx="15" cy="4" r="4" fill="#c9252b" />
      </svg>
    </div>
  </div>
);

/* ---------- status and taskbar ---------- */

const StatusItem = ({ name, value, className }: { name: string; value: string; className: string }) => (
  <span className={`flex gap-2 overflow-hidden border border-[#d4d4d4] bg-linear-to-b from-white to-[#ececec] pl-px leading-[19px] ${className}`}>
    <span>{name}:</span>
    <span>{value}</span>
  </span>
);

const StatusBar = () => (
  <footer className="flex h-[22px] shrink-0 gap-0.5 whitespace-nowrap border-t border-[#c8c8c8] bg-[#f0f0f0] pt-px text-xs">
    <StatusItem name="清单库" value="工程量清单项目计量规范(2013-湖北)" className="w-[382px]" />
    <StatusItem name="定额库" value="湖北省房屋建筑与装饰工程消耗量定额及基价表(2013)" className="min-w-0 flex-1" />
    <StatusItem name="定额专业" value="建筑工程" className="w-[229px]" />
    <StatusItem name="当前分部" value="整个项目" className="w-[177px]" />
    <StatusItem name="计税模式" value="增值税(一般计税方法)" className="w-[188px]" />
  </footer>
);

const TaskIcon = ({ label, wide = "w-[49px]", run = "", children }: { label: string; wide?: string; run?: string; children: ReactNode }) => (
  <button aria-label={label} className={`flex h-10 shrink-0 flex-col items-center ${wide} ${run}`}>
    <svg viewBox="0 0 24 24" className="mt-2 h-6 w-6 shrink-0" fill="none">{children}</svg>
  </button>
);

const EdgeE = ({ fill }: { fill: string }) => (
  <path d="M2 11C3 4.500 7.500 1.500 12.500 1.500 18.500 1.500 22 6 22 11.500V14H9c.2 3.200 3 4.600 6 4.600 2.300 0 4.400-.6 6-1.600v4.300c-2 1-4.400 1.500-7 1.500C7.500 22.800 4 19 4 14.500c0-3.800 2-6.500 5.300-8C5.800 7 3.200 8.800 2 11zM9 10h7.500c0-2.600-1.300-4-3.500-4-2.300 0-3.700 1.700-4 4z" fill={fill} />
);

const Tray = ({ children }: { children: ReactNode }) => (
  <svg viewBox="0 0 16 16" className="h-4 w-4 shrink-0" fill="none" stroke="#fff">{children}</svg>
);

const TaskBar = () => (
  <footer className="flex h-10 shrink-0 items-center bg-[#010b0e] text-white">
    <button aria-label="开始" className="flex h-10 w-12 shrink-0 items-center justify-center bg-black">
      <svg viewBox="0 0 16 16" className="h-4 w-4" fill="#fff"><path d="M0 2.300l6.500-1v6.200H0zM7.500 1.200L16 0v7.500H7.500zM0 8.500h6.500v6.200L0 13.700zM7.500 8.500H16V16l-8.500-1.200z" /></svg>
    </button>
    <label className="flex h-10 w-[344px] shrink-0 items-center bg-[#333] pl-[9px] pr-[14px]">
      <svg viewBox="0 0 22 22" className="h-[22px] w-[22px]" fill="none"><circle cx="11" cy="11" r="9.200" stroke="#f2f2f2" strokeWidth="2.600" /></svg>
      <input aria-label="搜索" placeholder="在这里输入你要搜索的内容" className="ml-[5px] min-w-0 flex-1 bg-transparent text-sm outline-none placeholder:text-[#999]" />
      <svg viewBox="0 0 12 18" className="h-[18px] w-3" fill="none" stroke="#9a9a9a"><rect x="3.500" y=".5" width="5" height="10" rx="2.500" /><path d="M1 8v2c0 4 10 4 10 0V8M6 13v4M3 17.500h6" /></svg>
    </label>
    <TaskIcon label="任务视图" wide="w-[50px]"><path d="M7.500 5.500h9v13h-9zM5.500 7.500h-3v9h3M18.500 7.500h3v9h-3" stroke="#fff" strokeWidth="1.200" /></TaskIcon>
    <TaskIcon label="风扇" wide="w-[50px]">
      <g fill="#dfe3e3">
        <path d="M11.500 11.500C7 13 1 12 1 7 1 3 5 0 9 2c3 2 1 6 2.500 9.500z" /><path d="M12.500 11.500C11 7 12 1 17 1c4 0 7 4 5 8-2 3-6 1-9.500 2.500z" />
        <path d="M12.500 12.500C17 11 23 12 23 17c0 4-4 7-8 5-3-2-1-6-2.500-9.500z" /><path d="M11.500 12.500C13 17 12 23 7 23c-4 0-7-4-5-8 2-3 6-1 9.500-2.500z" />
      </g>
    </TaskIcon>
    <TaskIcon label="浏览器" wide="w-[50px]"><path d="M20 3C12 1 5 5 4 12c0 5 4 9 9 8 5 0 7-4 6-8-1-3-5-4-7-1-1 3 1 5 3 4M20 3c-6 0-11 3-12 9" stroke="#c9cdcd" strokeWidth="1.700" /></TaskIcon>
    <TaskIcon label="Edge" wide="w-[50px]"><EdgeE fill="#0a78d6" /></TaskIcon>
    <TaskIcon label="应用商店" wide="w-[50px]">
      <path d="M2 7l20-2v18L4 21z" fill="#fff" /><path d="M8 6V4c0-3 7-4 7 0v2" stroke="#fff" strokeWidth="1.500" />
      <path d="M7 10.500l4-.4v4H7zM12 10l5-.5V14h-5zM7 15h4v4l-4-.4zM12 15h5v4.700l-5-.6z" fill="#010b0e" />
    </TaskIcon>
    <TaskIcon label="文件资源管理器" wide="w-[50px]">
      <path d="M1 3h8l2 2h12v16H1z" fill="#f8d573" /><path d="M1 8h22v13H1z" fill="#fde59a" /><path d="M5 22v-8h14v8h-4v-4H9v4z" fill="#35a7e0" />
    </TaskIcon>
    <TaskIcon label="Internet Explorer">
      <EdgeE fill="#2f9be8" /><path d="M1 20C-1 14 12 3 20 2c3 0 3 2 1 5" stroke="#f2c53b" strokeWidth="2" />
    </TaskIcon>
    <TaskIcon label="广联达" run="bg-linear-to-t from-[#76b9ed] from-[3px] to-transparent to-[3px] bg-clip-content px-1">
      <path d="M20 1c0 5-2 7-5 7 1-2 0-3-2-3-4 0-6 3-6 7s2 6.500 5.500 6.500c2.500 0 4-1.500 4-3.500H12v-4h10c1 7-3 12.500-10 12.500C5.500 23.500 1.500 19 1.500 13 1.500 6 6 1.500 12 1.500c3 0 6 1 8-.5z" fill="#1b9be8" />
    </TaskIcon>
    <TaskIcon label="安全浏览器" run="bg-linear-to-t from-[#76b9ed] from-[3px] to-transparent to-[3px] bg-clip-content px-1">
      <circle cx="12" cy="12" r="10" fill="#59b82c" /><path d="M18 13H7a5 5 0 0 0 10 2.500M7 11.500C7 5 17 5 17.500 12" stroke="#fff" strokeWidth="2.600" />
    </TaskIcon>
    <TaskIcon label="计价软件" run="border-b-[3px] border-[#76b9ed] bg-[#2f3739]">
      <rect x="1" y="1" width="22" height="22" rx="2" fill="#f39a1b" stroke="#ffc04a" />
      <path d="M4 5l13-1 1 14-13 1z" fill="#fff8e6" /><path d="M7 9l5-1M7 12l5-1M8 15l3-1" stroke="#b0660f" strokeWidth="1.300" /><path d="M21 3l-8 9-1 4 4-2 7-9z" fill="#ffd23a" stroke="#9c3a08" />
    </TaskIcon>

    <div className="ml-auto flex items-center pr-[14px] text-xs leading-[17px]">
      <p className="mr-[18px] w-[48px] text-center">21%<br />CPU使用</p>
      <div className="flex items-center gap-2">
        <Tray><path d="M3 10.500l5-5 5 5" strokeWidth="1.300" /></Tray>
        <Tray><path d="M.5.5h15v15H.5z" fill="#c23a2c" stroke="none" /><path d="M.5.5L8 8l7.500-7.500z" fill="#e05a45" stroke="none" /><circle cx="8" cy="6" r="2" fill="#f2b566" stroke="none" /></Tray>
        <Tray><path d="M5.500 5.500h9v6h-9z" /><path d="M7 7h6v3H7z" fill="#fff" /><path d="M1 3v3h4V3M2 1v2M4 1v2M3 6v5h2" /></Tray>
        <Tray><path d="M2 14c0-7 5-12 12-12M5 14c0-5 4-9 9-9M8 14c0-3 3-6 6-6M11 14c0-2 1-3 3-3" strokeWidth="1.200" /></Tray>
        <Tray><path d="M1 6h2l4-4v12l-4-4H1zM9 6c1 1 1 3 0 4M11 4c2 2 2 6 0 8M13 2c3 3 3 9 0 12" /></Tray>
      </div>
      <svg viewBox="0 0 22 14" className="ml-[9px] h-[14px] w-[22px]" fill="none" stroke="#fff"><path d="M.5 1.500h21v11H.5z" /><path d="M3 4.500h16M3 7h16" strokeDasharray="2 1" /><path d="M5 10h12" /></svg>
      <span className="ml-[9px] text-sm">中</span>
      <svg viewBox="0 0 16 16" className="ml-3 h-4 w-4"><path d="M1 2L14 0l2 13-12 3z" fill="#f0502a" /><path d="M11.500 4.500C8 2.500 4 5.500 7 7.500c4 1.500 5 2 3.500 4-2 1.500-4 .5-5-.5" stroke="#fff" strokeWidth="2" fill="none" /></svg>
      <p className="ml-[14px] w-[65px] whitespace-nowrap text-center leading-[19px]">8:47<br />2017/10/21</p>
      <button aria-label="通知" className="ml-[17px]">
        <svg viewBox="0 0 26 30" className="h-[30px] w-[26px]" fill="none">
          <path d="M1 4h16v12H8l-4 4v-4H1z" fill="#fff" /><path d="M4 7.500h10M4 10h10M4 12.500h10" stroke="#000" />
          <circle cx="17" cy="20" r="7.500" fill="#444" stroke="#aaa" />
          <text x="17" y="24.500" textAnchor="middle" fontSize="12" fontWeight="bold" fill="#fff">2</text>
        </svg>
      </button>
    </div>
  </footer>
);

export default function App() {
  return (
    <div lang="zh-CN" className="relative flex h-screen min-h-[700px] flex-col overflow-hidden bg-[#f0f0f0] text-black [font-family:'Noto_Sans_CJK_SC',sans-serif]">
      <TitleBar />
      <MenuBar />
      <MainToolbar />
      <main className="flex min-h-0 flex-1">
        <SideTabs />
        <SectionPanel />
        <div className="flex w-[7px] shrink-0 flex-col justify-center">
          <span className="h-[101px] w-[6px] border border-[#808080] bg-[#f4f4f4]" />
        </div>
        <div className="flex min-w-0 flex-1 flex-col">
          <EditToolbar />
          <BillGrid />
          <div className="flex h-[29px] shrink-0 items-center whitespace-nowrap pb-0.5 pl-0.5 pt-1 text-xs">
            <button className="h-5 w-[71px] border border-white border-l-[#696969] border-t-[#696969] bg-[#f8f8f8] leading-[18px]">工料机显示</button>
            <span className="ml-[5px] mr-[11px]"><VRule /></span>
            <button>查询单价构成</button>
          </div>
          <div className="flex min-h-0 flex-1">
            <ResourceGrid />
            <SidePanel />
          </div>
        </div>
      </main>
      <StatusBar />
      <TaskBar />
      <QueryDialog />
      <SpeedMeter />
    </div>
  );
}
